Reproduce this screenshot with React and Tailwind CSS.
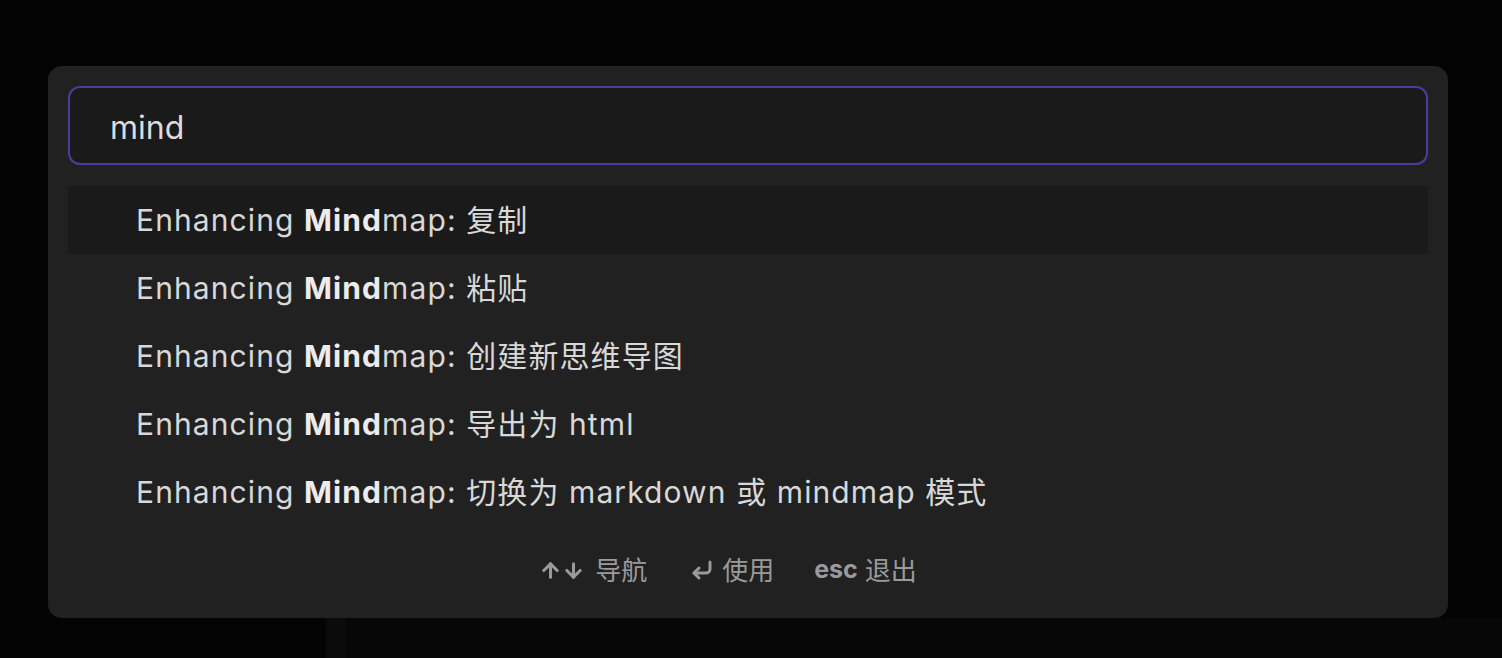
import React from "react";
import { ArrowUp, ArrowDown, CornerDownLeft } from "lucide-react";

const items = [
  "复制",
  "粘贴",
  "创建新思维导图",
  "导出为 html",
  "切换为 markdown 或 mindmap 模式",
];

export default function App() {
  const font = { fontFamily: 'Inter, "Noto Sans CJK SC", sans-serif' };
  return (
    <div className="relative h-[658px] w-full overflow-hidden bg-[#030303]" style={font}>
      <div className="flex h-full flex-col">
        <div className="h-[618px]" />
        <div className="flex flex-1">
          <div className="w-[326px] bg-[#040404]" />
          <div className="w-[20px] bg-[#0b0b0b]" />
          <div className="flex-1 bg-[#070707]" />
        </div>
      </div>
      <div className="absolute left-[48px] top-[66px] flex h-[552px] w-[1400px] flex-col rounded-[14px] bg-[#212121] p-[20px]">
        <div className="flex h-[79px] items-center rounded-[12px] border-2 border-[#4a3d9e] bg-[#1a1a1a] pl-[40px] pt-[4px] text-[32px] text-[#dcdcdc]">
          mind
        </div>
        <div className="mt-[21px] flex flex-col">
          {items.map((t, i) => (
            <div
              key={i}
              className={`flex h-[68px] items-center whitespace-pre pl-[68px] text-[30px] tracking-[1.1px] text-[#d8d8d8] ${i === 0 ? "bg-[#1a1a1a]" : ""}`}
            >
              <span>Enhancing </span>
              <span className="font-bold text-[#ececec]">Mind</span>
              <span>map: {t}</span>
            </div>
          ))}
        </div>
        <div className="flex flex-1 items-center justify-center pr-[40px] pt-[16px] text-[26px] text-[#9a9a9a]">
          <div className="flex items-center gap-[10px]">
            <span className="flex items-center">
              <ArrowUp size={23} strokeWidth={3.2} />
              <ArrowDown size={23} strokeWidth={3.2} />
            </span>
            <span>导航</span>
          </div>
          <div className="ml-[43px] flex items-center gap-[8px]">
            <CornerDownLeft size={24} strokeWidth={3} />
            <span>使用</span>
          </div>
          <div className="ml-[40px] flex items-center gap-[7px]">
            <span className="font-bold text-[25px]">esc</span>
            <span>退出</span>
          </div>
        </div>
      </div>
    </div>
  );
}
